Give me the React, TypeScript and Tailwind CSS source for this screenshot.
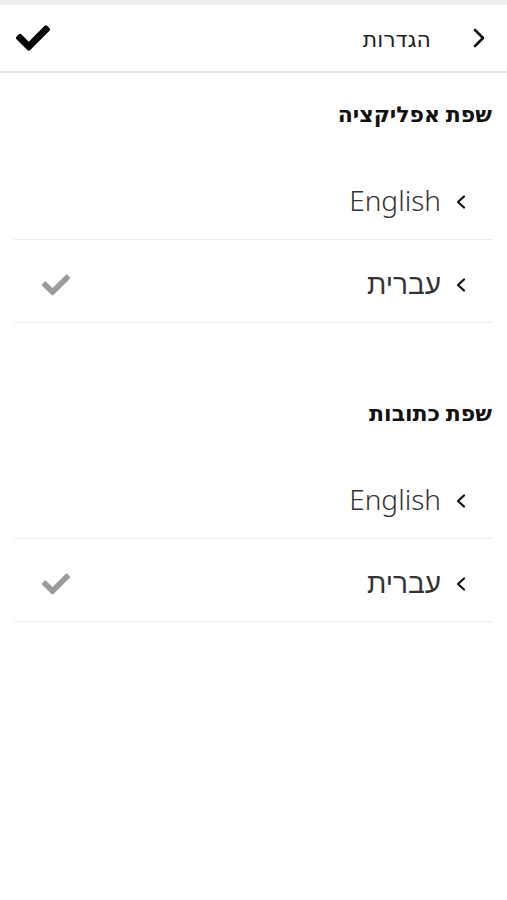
import React from 'react';
import { FaCheck } from 'react-icons/fa';

type Lang = { label: string; selected: boolean };

const font = { fontFamily: '"Noto Sans", "DejaVu Sans", sans-serif' };

const ChevronRight = () => (
  <svg width="16" height="20" viewBox="0 0 16 20" fill="none">
    <polyline points="4,2 12,10 4,18" stroke="#111" strokeWidth="2.6" strokeLinecap="round" strokeLinejoin="round" />
  </svg>
);

const ChevronLeft = () => (
  <svg width="12" height="16" viewBox="0 0 12 16" fill="none">
    <polyline points="9,2.5 3,8 9,13.5" stroke="#111" strokeWidth="2.2" strokeLinecap="round" strokeLinejoin="round" />
  </svg>
);

const Section = ({ title, items }: { title: string; items: Lang[] }) => (
  <div>
    <h2 className="text-[22px] leading-[24px] font-bold text-[#111] pr-[1px]">{title}</h2>
    <div className="mt-[32px]">
      {items.map((it) => (
        <div
          key={it.label}
          className="h-[83px] flex items-center justify-between pt-[8px] pr-[26px] pl-[28px] border-b border-[#ececec]"
        >
          <div className="flex items-center gap-[14px]">
            <ChevronLeft />
            <span className="text-[28px] font-light text-[#333] leading-none pb-[4px]">{it.label}</span>
          </div>
          {it.selected && <FaCheck size={28} color="#9b9b9b" />}
        </div>
      ))}
    </div>
  </div>
);

const App: React.FC = () => {
  const langs: Lang[] = [
    { label: 'English', selected: false },
    { label: 'עברית', selected: true },
  ];

  return (
    <div dir="rtl" className="w-[507px] min-h-[900px] bg-white" style={font}>
      <div className="h-[5px] bg-[#eeeeee]" />
      <header className="h-[68px] flex items-center justify-between pr-[20px] pl-[16px] border-b-2 border-[#e3e3e3]">
        <div className="flex items-center gap-[40px]">
          <ChevronRight />
          <span className="text-[22px] text-[#222]">הגדרות</span>
        </div>
        <FaCheck size={34} color="#000" />
      </header>
      <div className="px-[14px] pt-[28px]">
        <Section title="שפת אפליקציה" items={langs} />
        <div className="h-[77px]" />
        <Section title="שפת כתובות" items={langs} />
      </div>
    </div>
  );
};

export default App;
